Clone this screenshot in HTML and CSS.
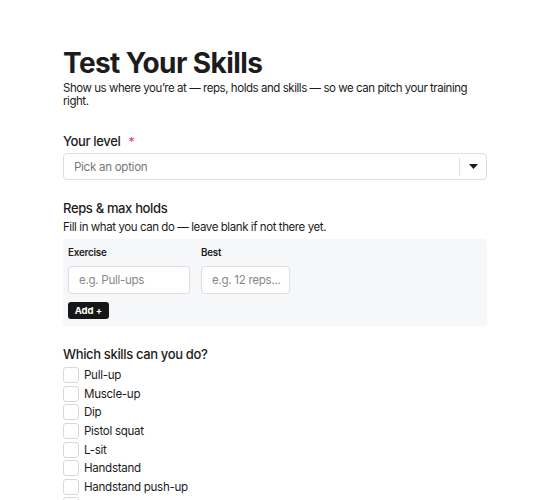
FILE: index.html
```html
<!DOCTYPE html>
<html>
<head>
<meta charset="utf-8">
<link rel="stylesheet" href="styles.css">
</head>
<body>
<main class="page">
  <h1 class="title">Test Your Skills</h1>
  <p class="lead">Show us where you’re at — reps, holds and skills — so we can pitch your training right.</p>

  <section class="field">
    <div class="label">Your level <span class="req">*</span></div>
    <div class="select">
      <span class="placeholder">Pick an option</span>
      <span class="sep"></span>
      <span class="caret"><svg width="9" height="5" viewBox="0 0 9 5"><path d="M0 0h9L4.5 5z" fill="#1a1a1a"/></svg></span>
    </div>
  </section>

  <section class="field reps">
    <div class="label">Reps &amp; max holds</div>
    <p class="hint">Fill in what you can do — leave blank if not there yet.</p>
    <div class="panel">
      <div class="cols">
        <div class="col">
          <div class="collabel">Exercise</div>
          <div class="input wide">e.g. Pull-ups</div>
        </div>
        <div class="col">
          <div class="collabel">Best</div>
          <div class="input narrow">e.g. 12 reps...</div>
        </div>
      </div>
      <button class="add">Add +</button>
    </div>
  </section>

  <section class="field skills">
    <div class="label">Which skills can you do?</div>
    <ul class="checks">
      <li><span class="box"></span>Pull-up</li>
      <li><span class="box"></span>Muscle-up</li>
      <li><span class="box"></span>Dip</li>
      <li><span class="box"></span>Pistol squat</li>
      <li><span class="box"></span>L-sit</li>
      <li><span class="box"></span>Handstand</li>
      <li><span class="box"></span>Handstand push-up</li>
      <li><span class="box"></span>Front lever</li>
    </ul>
  </section>
</main>
</body>
</html>
```
FILE: styles.css
```css
* { box-sizing: border-box; }
html, body { margin: 0; padding: 0; background: #fff; }
body {
  font-family: Inter, "Noto Sans", sans-serif;
  color: #1c1c1c;
  overflow: hidden;
  height: 500px;
}
.page {
  width: 424px;
  margin: 0 auto;
  padding-top: 45px;
}
.title {
  margin: 0;
  font-size: 28px;
  font-weight: 700;
  letter-spacing: -0.6px;
  line-height: 37px;
}
.lead {
  margin: 0;
  font-size: 11.5px;
  letter-spacing: -0.45px;
  line-height: 13px;
  color: #1c1c1c;
}
.field { margin-top: 24px; }
.label {
  font-size: 13px;
  font-weight: 500;
  letter-spacing: -0.35px;
  line-height: 18px;
}
.req { color: #e8407a; margin-left: 5px; font-size: 12px; }
.select {
  margin-top: 2px;
  height: 27px;
  border: 1px solid #dcdde0;
  border-radius: 4px;
  display: flex;
  align-items: center;
  padding-left: 10px;
}
.placeholder { flex: 1; font-size: 11.6px; letter-spacing: -0.3px; color: #777; }
.sep { width: 1px; height: 18px; background: #dcdde0; }
.caret { width: 26px; display: flex; justify-content: center; }
.reps { margin-top: 19px; }
.hint { margin: 2px 0 0; font-size: 11.5px; letter-spacing: -0.42px; line-height: 16px; color: #1c1c1c; }
.panel {
  margin-top: 4px;
  background: #f6f7f9;
  border-radius: 4px;
  padding: 7px 5px 7px;
}
.cols { display: flex; gap: 11px; }
.collabel { font-size: 9.8px; font-weight: 600; letter-spacing: -0.2px; line-height: 13px; }
.input {
  margin-top: 7px;
  height: 28px;
  background: #fff;
  border: 1px solid #dcdde0;
  border-radius: 4px;
  font-size: 11.6px;
  letter-spacing: -0.3px;
  color: #888;
  display: flex;
  align-items: center;
  padding-left: 10px;
}
.input.wide { width: 122px; }
.input.narrow { width: 89px; }
.add {
  margin-top: 8px;
  display: block;
  background: #161616;
  color: #fff;
  border: 0;
  border-radius: 3px;
  font-family: inherit;
  font-size: 9.5px;
  font-weight: 700;
  height: 17px;
  width: 41px;
  padding: 0;
}
.skills { margin-top: 19px; }
.checks { list-style: none; margin: 3px 0 0; padding: 0; }
.checks li {
  display: flex;
  align-items: center;
  height: 18.6px;
  font-size: 11.6px;
  letter-spacing: -0.3px;
}
.box {
  width: 16px;
  height: 16px;
  border: 1px solid #d8d9dc;
  border-radius: 3px;
  margin-right: 5px;
  background: #fff;
}
```
